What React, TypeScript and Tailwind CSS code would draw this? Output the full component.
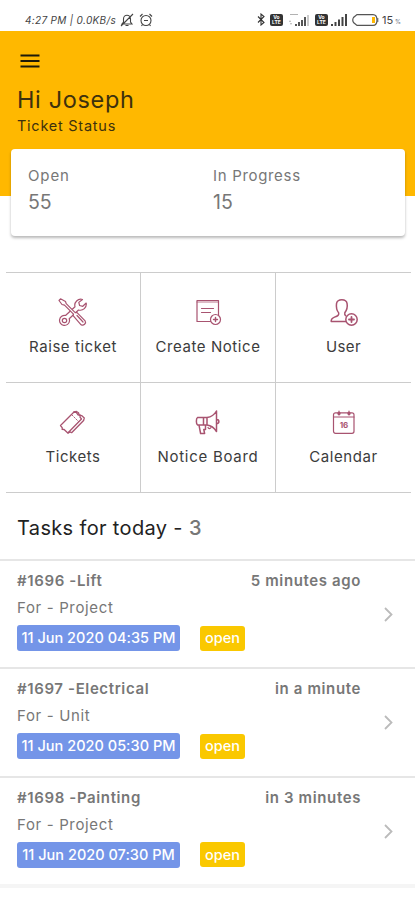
import React from "react";

type IconProps = { children: React.ReactNode };

function LineIcon({ children }: IconProps) {
  return (
    <svg width="30" height="30" viewBox="0 0 30 30" fill="none" stroke="#a85370" strokeWidth="1.2" strokeLinejoin="round" strokeLinecap="round">
      {children}
    </svg>
  );
}

const tiles = [
  {
    label: "Raise ticket",
    tracking: "tracking-[0.55px]",
    icon: (
      <LineIcon>
        <path d="M24.500 1.500a6 6 0 0 0-7.500 7.300L7.500 17.500a5 5 0 1 0 4 5.500c.1-1-.1-1.700-.3-2.300L20.500 12c4.500 1.200 8.500-2.500 7.700-7l-3.400 3.300-3.200-.8-.8-3.100Z" />
        <circle cx="6.500" cy="22.500" r="2.200" />
        <path d="M2.500.8 1 2.500l3 4 2.500.7 9 9-.4 1.500 8 9.100c2.500 1.400 5.500-1.500 4-4l-8.300-8.500-1.600.3-9-9L7.500 3.500Z" fill="white" />
        <path d="m19 17.500 6 6.500" />
      </LineIcon>
    ),
  },
  {
    label: "Create Notice",
    tracking: "tracking-[0.58px]",
    icon: (
      <LineIcon>
        <path d="M18 23.500H4v-21h21.500v15" />
        <path d="M4 4h21.500" strokeWidth=".8" />
        <path d="M8.500 10.500h12M8.500 14.500h9" />
        <circle cx="22.500" cy="21.500" r="5" fill="white" />
        <path d="M20.500 21.500h4M22.500 19.500v4" strokeWidth="1.400" />
      </LineIcon>
    ),
  },
  {
    label: "User",
    tracking: "tracking-[0.4px]",
    icon: (
      <LineIcon>
        <path d="M17.500 23.500H2.200c-.2-2.500 1-3.500 3.300-4.400 3.500-1.300 4.600-2 4.200-4.200C7.800 12.500 7.200 8 7.500 5.600c.9-5.200 9.800-5.200 10.600 0 .5 3-.4 6.700-2.300 9.200-.3 1.300-.1 2.100.9 3" strokeWidth="1.500" />
        <circle cx="22.500" cy="21.500" r="5.700" fill="white" strokeWidth="1.500" />
        <path d="M20 21.500h5M22.500 19v5" strokeWidth="1.800" />
      </LineIcon>
    ),
  },
  {
    label: "Tickets",
    tracking: "tracking-[0.55px]",
    icon: (
      <LineIcon>
        <path d="M16 4 2.500 17.500l1.800 2.300-.2 1.500 2 .2 3.700 3.500L23.500 11l-1.500-1.800.2-2-2.200-.3-1.700-2.600Z" strokeWidth="1.300" />
        <path d="M16 4 18.500 3.500l2 1.200.6 2.300 2.500.6 2.700 2.300-.7 2.600-12 12.200-1.500-.8-1.800 1.100" strokeWidth="1.300" />
        <path d="m14 7 6.500 6.500" strokeDasharray="1.500 1.500" strokeWidth=".9" />
      </LineIcon>
    ),
  },
  {
    label: "Notice Board",
    tracking: "tracking-[0.72px]",
    icon: (
      <LineIcon>
        <path d="M4.500 9.500H14V17H4.500C3 16 3 10.500 4.500 9.500ZM10.500 9.500V17M14 9.500c4-.5 7.500-3 9.500-6.500v20.500c-2-3.300-5.500-6-9.500-6.500M24 11.500c2.500.2 2.500 4 0 4.200M6 17.200l1.600 8.300h4l-.8-4h1.700v-4" strokeWidth="1.500" />
        <path d="M15 19.500c.5 1.200 2 1.500 3 .2" />
      </LineIcon>
    ),
  },
  {
    label: "Calendar",
    tracking: "tracking-[0.6px]",
    icon: (
      <LineIcon>
        <rect x="4.500" y="4.800" width="20.500" height="20.500" rx="2" />
        <path d="M4.500 9h20.500M10 3v4M20 3v4" />
        <circle cx="10" cy="5.500" r="1.100" fill="#a85370" />
        <circle cx="20" cy="5.500" r="1.100" fill="#a85370" />
        <text x="15" y="19.500" textAnchor="middle" fill="#a85370" stroke="none" fontSize="8" fontWeight="700" fontFamily="Inter, sans-serif">16</text>
      </LineIcon>
    ),
  },
];

const tasks = [
  { title: "#1696 -Lift", when: "5 minutes ago", target: "For - Project", date: "11 Jun 2020 04:35 PM" },
  { title: "#1697 -Electrical", when: "in a minute", target: "For - Unit", date: "11 Jun 2020 05:30 PM" },
  { title: "#1698 -Painting", when: "in 3 minutes", target: "For - Project", date: "11 Jun 2020 07:30 PM" },
];

function Signal() {
  return (
    <svg width="16" height="12" viewBox="0 0 16 12" fill="#444">
      <path d="M0 10h2v2H0zM3.500 8h2v4h-2zM7 5.500h2V12H7zM10.500 3h2v9h-2zM14 0h2v12h-2z" />
    </svg>
  );
}

function Volte() {
  return (
    <span className="flex h-3 w-[13px] flex-col items-center justify-center rounded-[2px] bg-[#333] text-[5px] leading-[5px] font-bold text-white">
      <span>Vo</span>
      <span>LTE</span>
    </span>
  );
}

function StatusBar() {
  return (
    <div className="flex h-[31px] items-center pt-2 pr-[14px] pl-[25px] text-[#444]">
      <span className="w-[92px] text-[10px] leading-3 tracking-[0.33px] whitespace-nowrap italic">4:27 PM | 0.0KB/s</span>
      <svg className="ml-[3px]" width="14" height="14" viewBox="0 0 14 14" fill="none" stroke="#444" strokeWidth="1.100">
        <path d="M2 11h10l-1.500-2V6C10.500 1 3.500 1 3.500 6v3ZM5.500 12.500h3M1 13 13 1" />
      </svg>
      <svg className="ml-[5px]" width="14" height="14" viewBox="0 0 14 14" fill="none" stroke="#444" strokeWidth="1.100">
        <circle cx="7" cy="7.500" r="5" />
        <path d="M1 3.500 3.500 1M13 3.500 10.500 1M5 7.500h4M3.500 11.500l-1 1.500M10.500 11.500l1 1.500" />
      </svg>
      <div className="ml-auto flex items-center">
        <svg width="8" height="13" viewBox="0 0 8 13" fill="none" stroke="#333" strokeWidth="1.100">
          <path d="m1 3.500 6 6L4 12V1l3 2.500-6 6" />
        </svg>
        <span className="mr-[6px] ml-[5px]"><Volte /></span>
        <svg width="20" height="14" viewBox="0 0 20 14" fill="#555">
          <path d="M1 1h8v1H1zM0 9h2l-1-2zM1 10h2l-1 2z" opacity=".45" />
          <path d="M6 11h2v2H6zM9 9h2v4H9zM12 7h2v6h-2zM15 4h2v9h-2z" />
          <path d="M18 2h2v11h-2z" opacity=".3" />
        </svg>
        <span className="mr-[3px] ml-[6px]"><Volte /></span>
        <Signal />
        <svg className="ml-[5px]" width="27" height="12" viewBox="0 0 27 12">
          <path d="M5 .6h16q4 0 4 5.400t-4 5.400H5L1.500 8.500Q0 6 1.500 3.500Z" fill="white" stroke="#555" strokeWidth="1.200" />
          <path d="M20 3h3v6h-3z" fill="#ffb800" />
          <path d="M25.800 4v4" stroke="#555" />
        </svg>
        <span className="ml-[3px] text-[11px] leading-3">15</span>
        <span className="ml-[2px] pt-1 text-[6px] leading-2 text-gray-500">%</span>
      </div>
    </div>
  );
}

export default function App() {
  return (
    <main className="h-[900px] w-[415px] overflow-hidden bg-white font-['Inter',sans-serif]">
      <StatusBar />
      <header className="h-[165px] bg-[#ffb800] px-[17px] pt-[23px] text-[#3d310d]">
        <svg className="ml-[3px]" width="20" height="14" viewBox="0 0 20 14" stroke="#1e1a09" strokeWidth="2">
          <path d="M0.500 1.500h19M0.500 7h19M0.500 12.500h19" />
        </svg>
        <h1 className="mt-[18px] text-[23.500px] leading-7 font-normal tracking-[0.65px] whitespace-nowrap">Hi Joseph</h1>
        <p className="mt-[2px] text-[14.500px] leading-5 tracking-[0.75px] whitespace-nowrap">Ticket Status</p>
      </header>
      <section className="relative mx-auto -mt-[47px] mr-[10px] ml-[11px] flex h-[87px] rounded-[4px] bg-white px-[17px] pt-[17px] text-[#777] shadow-[0_2px_3px_rgba(0,0,0,0.28)]">
        <div className="w-[185px]">
          <div className="text-[15px] leading-5 tracking-[0.9px]">Open</div>
          <div className="mt-1 text-[19.500px] leading-6">55</div>
        </div>
        <div>
          <div className="text-[15px] leading-5 tracking-[0.68px]">In Progress</div>
          <div className="mt-1 text-[19.500px] leading-6">15</div>
        </div>
      </section>
      <section className="mt-[36px] mr-[4px] ml-[6px] grid grid-cols-[135px_135px_135px] border-t border-[#ccc] text-[#3c3c3c]">
        {tiles.map((tile, index) => (
          <div key={tile.label} className={`flex h-[110px] flex-col items-center border-b border-[#ccc] ${index < 3 ? "pt-[25px]" : "pt-[25px]"} ${index % 3 < 2 ? "border-r" : ""}`}>
            {tile.icon}
            <span className={`mt-[9px] text-[15px] leading-5 whitespace-nowrap ${tile.tracking}`}>{tile.label}</span>
          </div>
        ))}
      </section>
      <h2 className="flex h-[66px] items-center pt-[4px] pl-[17px] text-[20px] font-normal tracking-[0.35px] whitespace-pre text-[#222]">
        Tasks for today - <span className="font-medium text-[#777]">3</span>
      </h2>
      <section>
        {tasks.map((task) => (
          <article key={task.title} className="flex h-[108.300px] border-t-2 border-[#e6e6e6] pl-[17px] text-[#777]">
            <div className="w-[344px] pt-[10px]">
              <div className="flex justify-between text-[15px] leading-5 font-semibold tracking-[0.62px] whitespace-nowrap">
                <span>{task.title}</span>
                <span>{task.when}</span>
              </div>
              <div className="mt-[7px] text-[15px] leading-5 tracking-[0.65px]">{task.target}</div>
              <div className="mt-[7px] flex items-center">
                <span className="flex h-[26px] w-[163px] items-center justify-center rounded-[3px] bg-[#7495e8] text-[14.500px] font-medium tracking-[0.02px] whitespace-nowrap text-white">{task.date}</span>
                <span className="ml-[20px] flex h-[25px] w-[45px] items-center justify-center rounded-[3px] bg-[#fac800] text-[14.500px] font-medium text-white">open</span>
              </div>
            </div>
            <svg className="mt-[46px] ml-[23px]" width="9" height="15" viewBox="0 0 9 15" fill="none" stroke="#bbb" strokeWidth="1.800">
              <path d="m1 1 6.500 6.500L1 14" />
            </svg>
          </article>
        ))}
        <div className="h-1 bg-[#f5f5f5]" />
      </section>
    </main>
  );
}
